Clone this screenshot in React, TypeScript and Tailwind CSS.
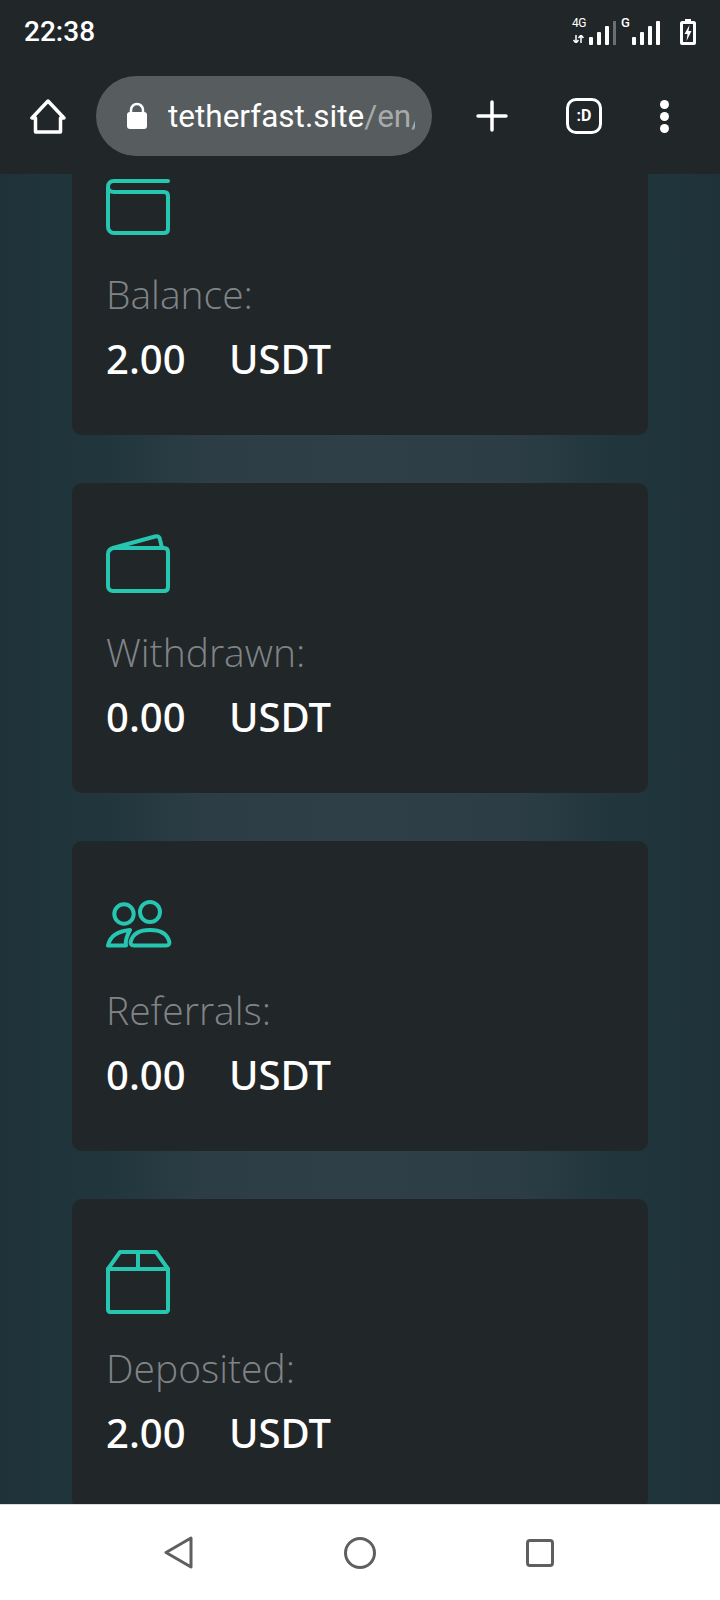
const TEAL = "#26c6b0";

function BalanceIcon() {
  return (
    <svg width="66" height="56" viewBox="0 0 66 56" fill="none" stroke={TEAL} strokeWidth="4" strokeLinecap="round" strokeLinejoin="round">
      <path d="M62 2H8C4 2 2 4.500 2 8v40c0 3 2.500 6 6 6h50c2.500 0 4-1.500 4-4V17c0-2.500-1.500-4-4-4H8C4.500 13 2 11 2 8" />
    </svg>
  );
}

function WithdrawnIcon() {
  return (
    <svg width="66" height="59" viewBox="0 0 66 59" fill="none" stroke={TEAL} strokeWidth="4" strokeLinecap="round" strokeLinejoin="round">
      <path d="M8 14h50c2.500 0 4 1.500 4 4v35c0 2.500-1.500 4-4 4H7c-3 0-5-2-5-5V20c0-3 2-5 5-6L49 2.500c3-.7 4.500.5 5 3L56 14" />
    </svg>
  );
}

function ReferralsIcon() {
  return (
    <svg width="66" height="48" viewBox="0 0 66 48" fill="none" stroke={TEAL} strokeWidth="4" strokeLinecap="round" strokeLinejoin="round">
      <circle cx="18" cy="14" r="9.7" />
      <circle cx="44" cy="12" r="10" />
      <path d="M24 30C12 31 4 36 2 45.500h18c-1-5 1-10 4-15.500z" />
      <path d="M28 45.500c-3 0-4-2-3-4.500C27 34 34 30 44 30s17 4 19 11c1 2.500 0 4.500-3 4.500z" />
    </svg>
  );
}

function DepositedIcon() {
  return (
    <svg width="66" height="64" viewBox="0 0 66 64" fill="none" stroke={TEAL} strokeWidth="4" strokeLinecap="round" strokeLinejoin="round">
      <path d="M2 19h60v41c0 1-1 2-2 2H4c-1 0-2-1-2-2z" />
      <path d="M2 19L14 2h36l12 17" />
      <path d="M32 2v17" />
    </svg>
  );
}

const cards = [
  { label: "Balance:", value: "2.00", icon: <BalanceIcon />, iconBox: "h-[56px] mt-[4px] mb-[40px]" },
  { label: "Withdrawn:", value: "0.00", icon: <WithdrawnIcon />, iconBox: "h-[59px] mt-[1px] mb-[40px]" },
  { label: "Referrals:", value: "0.00", icon: <ReferralsIcon />, iconBox: "h-[48px] mt-[9px] mb-[43px]" },
  { label: "Deposited:", value: "2.00", icon: <DepositedIcon />, iconBox: "h-[64px] mt-[1px] mb-[35px]" },
];

function SignalBars({ tall }: { tall?: boolean }) {
  return (
    <div className="flex items-end gap-[4px]">
      <div className="w-[4px] h-[8px] bg-white rounded-[1px]" />
      <div className="w-[4px] h-[13px] bg-white rounded-[1px]" />
      <div className="w-[4px] h-[19px] bg-white rounded-[1px]" />
      {tall && <div className="w-[4px] h-[24px] bg-white rounded-[1px]" />}
    </div>
  );
}

function StatusBar() {
  return (
    <div className="h-[62px] flex items-center justify-between pl-[24px] pr-[24px]">
      <span className="text-[28px] font-medium text-white leading-none font-['Roboto',sans-serif] mt-[2px]">22:38</span>
      <div className="flex items-end mt-[-2px] font-['Roboto',sans-serif]">
        <div className="flex flex-col items-start w-[14px] mr-[3px] text-white leading-none mb-[2px]">
          <span className="text-[12px] tracking-[-0.5px]">4G</span>
          <svg className="mt-[6px]" width="12" height="8" viewBox="0 0 12 8" fill="none" stroke="#fff" strokeWidth="1.5">
            <path d="M4 0v8M1.500 5L4 8l2.500-3M9 8V0M6.500 3L9 0l2.500 3" />
          </svg>
        </div>
        <SignalBars />
        <div className="w-[3px] h-[24px] bg-[#6b6f72] ml-[4px] mr-[5px]" />
        <span className="w-[8px] mr-[3px] text-[13px] font-medium text-white leading-none mb-[16px]">G</span>
        <SignalBars tall />
        <svg className="ml-[20px]" width="16" height="26" viewBox="0 0 16 26" fill="none">
          <path d="M5 0h6v2h3c1 0 2 1 2 2v20c0 1-1 2-2 2H2c-1 0-2-1-2-2V4c0-1 1-2 2-2h3z" fill="#fff" />
          <path d="M3 5h10v18H3z" fill="#212629" />
          <path d="M9.500 6L4.500 15h3l-1 7 5-10h-3z" fill="#fff" />
        </svg>
      </div>
    </div>
  );
}

function Toolbar() {
  return (
    <div className="h-[112px] flex items-start">
      <svg className="ml-[30px] mt-[37px]" width="36" height="36" viewBox="0 0 36 36" fill="none" stroke="#fff" strokeWidth="3.5" strokeLinejoin="round">
        <path d="M18 2L2 19h3.500v14h25V19H34z" />
      </svg>
      <div className="ml-[30px] mt-[14px] w-[336px] h-[80px] rounded-full bg-[#575c5e] flex items-center pl-[30px] overflow-hidden">
        <svg width="22" height="28" viewBox="0 0 22 28" className="shrink-0 mt-[-1px]">
          <path d="M5 12V8a6 6 0 0 1 12 0v4" fill="none" stroke="#fff" strokeWidth="2.5" />
          <rect x="1" y="10" width="20" height="17" rx="3" fill="#fff" />
        </svg>
        <span className="ml-[20px] text-[31.5px] text-white leading-none whitespace-nowrap font-['Roboto',sans-serif] mt-[2px] overflow-hidden w-[247px]">
          tetherfast.site<span className="text-[#a7abac]">/en/</span>
        </span>
      </div>
      <svg className="ml-[44px] mt-[38px]" width="32" height="32" viewBox="0 0 32 32" stroke="#fff" strokeWidth="3.5" strokeLinecap="round">
        <path d="M16 2v28M2 16h28" />
      </svg>
      <div className="ml-[58px] mt-[36px] w-[36px] h-[36px] rounded-[10px] border-[3.5px] border-white flex items-center justify-center text-white text-[16px] font-bold leading-none font-['Roboto',sans-serif]">
        :D
      </div>
      <div className="ml-[58px] mt-[38px] flex flex-col gap-[3px]">
        <div className="w-[9px] h-[9px] rounded-full bg-white" />
        <div className="w-[9px] h-[9px] rounded-full bg-white" />
        <div className="w-[9px] h-[9px] rounded-full bg-white" />
      </div>
    </div>
  );
}

function StatCard({ card }: { card: (typeof cards)[number] }) {
  return (
    <div className="shrink-0 h-[310px] rounded-[10px] bg-[#212629] pl-[34px] pt-[50px]">
      <div className={`flex items-end ${card.iconBox}`}>{card.icon}</div>
      <div className="text-[39px] leading-[38px] font-light text-[#808487] font-['Open_Sans',sans-serif]">{card.label}</div>
      <div className="mt-[22px] text-[40px] leading-[48px] font-medium text-white font-['Noto_Sans',sans-serif] flex">
        <span className="w-[123px]">{card.value}</span>
        <span>USDT</span>
      </div>
    </div>
  );
}

export default function App() {
  return (
    <div className="w-[720px] h-[1600px] flex flex-col overflow-hidden bg-[#212629]">
      <header className="shrink-0 h-[174px]">
        <StatusBar />
        <Toolbar />
      </header>

      <main className="h-[1330px] overflow-hidden bg-[linear-gradient(to_right,#1f3239_0%,#20353c_14%,#2c3d45_28%,#2f3f47_50%,#2c3d45_72%,#20353c_86%,#1f3239_100%)]">
        <div className="mt-[-49px] px-[72px] flex flex-col gap-[48px]">
          {cards.map((card) => (
            <StatCard key={card.label} card={card} />
          ))}
        </div>
      </main>

      <nav className="shrink-0 h-[96px] bg-white border-t border-[#dcdcdc] flex items-center">
        <svg className="ml-[164px]" width="30" height="34" viewBox="0 0 30 34" fill="none" stroke="#5f5f5f" strokeWidth="3" strokeLinejoin="round">
          <path d="M27 2L2 16.500 27 31z" />
        </svg>
        <div className="ml-[150px] w-[32px] h-[32px] rounded-full border-[3px] border-[#5f5f5f]" />
        <div className="ml-[150px] w-[28px] h-[28px] rounded-[4px] border-[3px] border-[#5f5f5f]" />
      </nav>
    </div>
  );
}
